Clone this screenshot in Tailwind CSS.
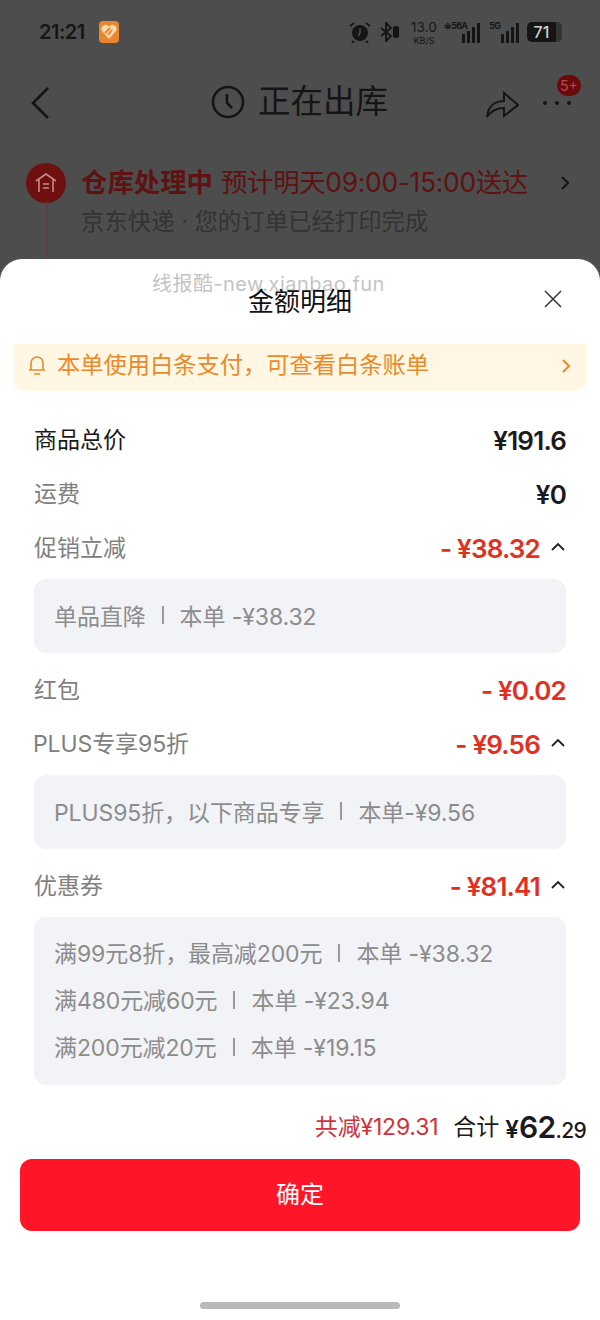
<!DOCTYPE html>
<html lang="zh">
<head>
<meta charset="UTF-8">
<title>金额明细</title>
<script src="https://cdn.jsdelivr.net/npm/@tailwindcss/browser@4"></script>
</head>
<body class="bg-[#4d4d4d] font-['Inter','Noto_Sans_CJK_SC',sans-serif]">
<div class="w-[600px] h-[1320px] flex flex-col overflow-hidden">

  <!-- page behind the sheet, dimmed -->
  <div class="h-[259px] shrink-0 flex flex-col">
    <div class="h-[64px] flex items-center justify-between pl-[39px] pr-[38px]">
      <div class="flex items-center gap-[14px]">
        <span class="text-[20px] font-semibold text-[#151515] tracking-[-0.5px]">21:21</span>
        <svg width="20" height="22" viewBox="0 0 20 22"><rect width="20" height="22" rx="4" fill="#e8872f"/><path d="M10 18 3 10a4 4 0 0 1 7-4 4 4 0 0 1 7 4z" fill="#f8d9b0"/><path d="M6 12 11 7M9 14l4-5" stroke="#e8872f" stroke-width="2"/></svg>
      </div>
      <div class="flex items-center text-[#151515]">
        <svg width="22" height="22" viewBox="0 0 22 22" class="mr-[9px]"><circle cx="11" cy="12" r="8" fill="#151515"/><path d="M11 7v5l-2 3" stroke="#4d4d4d" stroke-width="1.5" fill="none"/><path d="M1 5l4-3M21 5l-4-3M5 20l-2 2M17 20l2 2" stroke="#151515" stroke-width="2"/></svg>
        <svg width="20" height="20" viewBox="0 0 20 20" class="mr-[10px]"><path d="M1 6l10 8-5 5V1l5 5L1 14" stroke="#151515" stroke-width="2" fill="none"/><rect x="13" y="4" width="6" height="12" rx="2" fill="#151515"/></svg>
        <div class="flex flex-col items-center text-[#151515] w-[28px] mr-[6px]"><span class="text-[13px] leading-[16px] tracking-[0.3px]">13.0</span><span class="text-[9px] leading-[11px]">KB/S</span></div>
        <div class="flex items-end h-[22px] gap-[2px] mr-[9px]">
          <span class="text-[9px] font-bold self-start leading-[10px] tracking-[-0.8px] mr-[-8px] w-[24px]">≑56A</span>
          <span class="w-[3px] h-[9px] bg-[#151515]"></span><span class="w-[3px] h-[12px] bg-[#151515]"></span><span class="w-[3px] h-[16px] bg-[#151515]"></span><span class="w-[3px] h-[20px] bg-[#151515]"></span>
        </div>
        <div class="flex items-end h-[22px] gap-[2px] mr-[8px]">
          <span class="text-[9px] font-bold self-start leading-[10px] tracking-[-0.5px] mr-[-4px] w-[14px]">5G</span>
          <span class="w-[3px] h-[9px] bg-[#151515]"></span><span class="w-[3px] h-[12px] bg-[#151515]"></span><span class="w-[3px] h-[16px] bg-[#151515]"></span><span class="w-[3px] h-[20px] bg-[#151515]"></span>
        </div>
        <div class="w-[35px] h-[20px] rounded-[5px] bg-[linear-gradient(90deg,#151515_82%,#333333_82%)] text-[#d0d0d0] text-[16px] font-medium flex items-center justify-center pr-[6px]">71</div>
      </div>
    </div>

    <div class="h-[76px] flex items-center justify-between pl-[28px] pr-[29px] relative">
      <svg width="24" height="36" viewBox="0 0 24 36" fill="none" class="mt-[2px]"><path d="M20 3 5 18l15 15" stroke="#151515" stroke-width="2.6"/></svg>
      <div class="absolute left-[211px] top-[18px] flex items-center gap-[13px]">
        <svg width="34" height="34" viewBox="0 0 34 34" fill="none"><circle cx="17" cy="17" r="15" stroke="#151515" stroke-width="2.6"/><path d="M16 9v9l5 5" stroke="#151515" stroke-width="2.6"/></svg>
        <span class="text-[32.5px] leading-[40px] text-[#151515]">正在出库</span>
      </div>
      <div class="flex items-center gap-[24px] mt-[2px]">
        <svg width="34" height="32" viewBox="0 0 34 32" fill="none"><path d="M2 30C3 20 9 14 19 14V6l14 12-14 11v-8C11 21 6 24 2 30z" stroke="#151515" stroke-width="2"/></svg>
        <div class="relative flex gap-[8px]">
          <span class="size-[4px] rounded-full bg-[#151515]"></span><span class="size-[4px] rounded-full bg-[#151515]"></span><span class="size-[4px] rounded-full bg-[#151515]"></span>
          <span class="absolute -top-[26px] left-[14px] w-[24px] h-[21px] rounded-full bg-[#6b0a0a] text-[#b54a4a] text-[14px] leading-[21px] text-center">5+</span>
        </div>
      </div>
    </div>

    <div class="flex pl-[26px] pr-[28px] mt-[23px] relative">
      <div class="w-[40px] h-[40px] rounded-full bg-[#6e1010] flex items-center justify-center shrink-0">
        <svg width="24" height="22" viewBox="0 0 24 22" fill="none"><path d="M2 9 12 2l10 7M5 8v12M19 8v12M9 12h6M9 16h6" stroke="#c28a8a" stroke-width="1.6"/></svg>
      </div>
      <span class="absolute left-[46px] top-[38px] w-[1px] h-[60px] bg-[#5a3a3a]"></span>
      <div class="ml-[15px] flex-1 min-w-0">
        <div class="flex items-center h-[40px]">
          <span class="text-[26.4px] font-semibold text-[#5e1212]">仓库处理中</span>
          <span class="text-[26.4px] text-[#5e1212] ml-[8px] tracking-[-0.3px] whitespace-nowrap">预计明天09:00-15:00送达</span>
          <svg width="12" height="16" viewBox="0 0 12 16" fill="none" class="ml-auto"><path d="m2 2 6 6-6 6" stroke="#151515" stroke-width="2"/></svg>
        </div>
        <div class="text-[23.4px] leading-[38px] text-[#333333]">京东快递 · 您的订单已经打印完成</div>
      </div>
    </div>
  </div>

  <!-- bottom sheet -->
  <div class="flex-1 bg-white rounded-t-[22px] relative flex flex-col">
    <span class="absolute left-[152px] top-[12px] text-[20px] leading-[26px] text-[#c4c4c4] tracking-[0.45px]">线报酷-new.xianbao.fun</span>
    <div class="h-[85px] shrink-0 relative flex justify-center pt-[25px]">
      <span class="text-[26px] leading-[36px] text-[#111]">金额明细</span>
      <svg width="20" height="20" viewBox="0 0 20 20" fill="none" class="absolute right-[37px] top-[30px]"><path d="m2 2 16 16M18 2 2 18" stroke="#333" stroke-width="1.5"/></svg>
    </div>

    <div class="mx-[13px] h-[47px] shrink-0 rounded-b-[12px] bg-[#fff7e3] flex items-center pl-[14px] pr-[14px] text-[#e98a2c]">
      <svg width="20" height="22" viewBox="0 0 20 22" fill="none" class="mb-[6px]"><path d="M4 16V9a6 6 0 0 1 12 0v7M2 16h16M7 20h6" stroke="#e98a2c" stroke-width="1.6"/></svg>
      <span class="text-[23.25px] leading-[30px] ml-[10px] mb-[6px]">本单使用白条支付，可查看白条账单</span>
      <svg width="12" height="16" viewBox="0 0 12 16" fill="none" class="ml-auto mb-[4px]"><path d="m2 2 6 6-6 6" stroke="#e98a2c" stroke-width="2"/></svg>
    </div>

    <div class="px-[34px] mt-[28px] flex flex-col">
      <div class="h-[42px] flex items-center justify-between">
        <span class="text-[23px] text-[#1a1a1a]">商品总价</span>
        <span class="text-[26px] font-semibold text-[#1a1a22] tracking-[-0.8px]">¥191.6</span>
      </div>
      <div class="h-[42px] mt-[12px] flex items-center justify-between">
        <span class="text-[23px] text-[#808080]">运费</span>
        <span class="text-[26px] font-semibold text-[#1a1a22] tracking-[-0.8px]">¥0</span>
      </div>
      <div class="h-[42px] mt-[12px] flex items-center justify-between">
        <span class="text-[23px] text-[#808080]">促销立减</span>
        <div class="flex items-center gap-[11px]">
          <span class="text-[26px] font-semibold text-[#e2301f] tracking-[-0.8px]">- ¥38.32</span>
          <svg width="14" height="10" viewBox="0 0 14 10" fill="none" class="mr-[1px] mb-[2px]"><path d="m1 8 6-6 6 6" stroke="#222" stroke-width="1.8"/></svg>
        </div>
      </div>
      <div class="h-[74px] mt-[10px] pt-[2px] rounded-[12px] bg-[#f2f3f7] px-[20px] flex items-center text-[23px] tracking-[-0.1px] text-[#8c8c8c]">
        <span>单品直降</span><span class="w-[2px] h-[18px] bg-[#999999] mx-[16px] mb-[4px]"></span><span>本单 -¥38.32</span>
      </div>

      <div class="h-[42px] mt-[16px] flex items-center justify-between">
        <span class="text-[23px] text-[#808080]">红包</span>
        <span class="text-[26px] font-semibold text-[#e2301f] tracking-[-0.8px]">- ¥0.02</span>
      </div>
      <div class="h-[42px] mt-[12px] -ml-[1px] flex items-center justify-between">
        <span class="text-[23px] text-[#808080] tracking-[-0.1px]">PLUS专享95折</span>
        <div class="flex items-center gap-[11px]">
          <span class="text-[26px] font-semibold text-[#e2301f] tracking-[-0.8px]">- ¥9.56</span>
          <svg width="14" height="10" viewBox="0 0 14 10" fill="none" class="mr-[1px] mb-[2px]"><path d="m1 8 6-6 6 6" stroke="#222" stroke-width="1.8"/></svg>
        </div>
      </div>
      <div class="h-[74px] mt-[10px] pt-[2px] rounded-[12px] bg-[#f2f3f7] px-[20px] flex items-center text-[23px] tracking-[-0.1px] text-[#8c8c8c]">
        <span>PLUS95折，以下商品专享</span><span class="w-[2px] h-[18px] bg-[#999999] mx-[16px] mb-[4px]"></span><span>本单-¥9.56</span>
      </div>

      <div class="h-[42px] mt-[16px] flex items-center justify-between">
        <span class="text-[23px] text-[#808080]">优惠券</span>
        <div class="flex items-center gap-[11px]">
          <span class="text-[26px] font-semibold text-[#e2301f] tracking-[-0.8px]">- ¥81.41</span>
          <svg width="14" height="10" viewBox="0 0 14 10" fill="none" class="mr-[1px] mb-[2px]"><path d="m1 8 6-6 6 6" stroke="#222" stroke-width="1.8"/></svg>
        </div>
      </div>
      <div class="h-[168px] mt-[10px] rounded-[12px] bg-[#f2f3f7] px-[20px] pt-[14px] flex flex-col text-[23px] tracking-[-0.1px] leading-[47px] text-[#8c8c8c]">
        <div class="flex items-center"><span>满99元8折，最高减200元</span><span class="w-[2px] h-[18px] bg-[#999999] mx-[16px] mb-[4px]"></span><span>本单 -¥38.32</span></div>
        <div class="flex items-center"><span>满480元减60元</span><span class="w-[2px] h-[18px] bg-[#999999] mx-[16px] mb-[4px]"></span><span>本单 -¥23.94</span></div>
        <div class="flex items-center"><span>满200元减20元</span><span class="w-[2px] h-[18px] bg-[#999999] mx-[16px] mb-[4px]"></span><span>本单 -¥19.15</span></div>
      </div>
    </div>

    <div class="h-[42px] mt-[21px] pr-[14px] flex items-center justify-end">
      <span class="text-[23px] text-[#d0323a] tracking-[-0.2px]">共减¥129.31</span>
      <span class="text-[23px] text-[#1a1a1a] ml-[15px]">合计</span>
      <span class="ml-[6px] font-semibold text-[#1a1a22] text-[24px] leading-none">¥<span class="text-[30px] tracking-[-0.6px]">62</span><span class="text-[21px] font-medium tracking-[-0.7px]">.29</span></span>
    </div>

    <button class="mx-[20px] mt-[11px] h-[72px] shrink-0 rounded-[12px] bg-[#ff1528] text-white text-[24px]">确定</button>

    <div class="mt-auto mb-[11px] mx-auto w-[200px] h-[7px] rounded-full bg-[#b9b9b9]"></div>
  </div>
</div>
</body>
</html>
